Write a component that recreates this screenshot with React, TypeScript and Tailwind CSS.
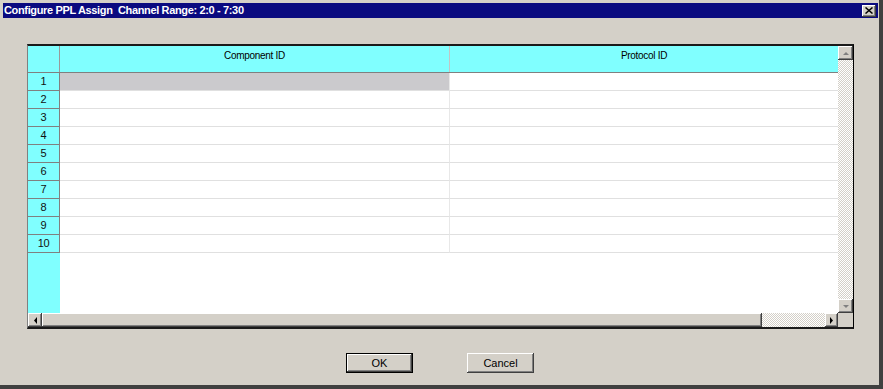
import React from 'react';

const ROWS = [1, 2, 3, 4, 5, 6, 7, 8, 9, 10];

const raised =
  'bg-[#d4d0c8] shadow-[inset_-1px_-1px_#404040,inset_1px_1px_#ffffff,inset_-2px_-2px_#808080,inset_2px_2px_#d4d0c8]';
const dither =
  'bg-[conic-gradient(#d4d0c8_25%,#ffffff_0_50%,#d4d0c8_0_75%,#ffffff_0)] bg-[length:2px_2px]';

const Arrow: React.FC<{ dir: 'up' | 'down' | 'left' | 'right'; color: string }> = ({ dir, color }) => {
  const pts: Record<string, string> = {
    up: '1,4 4,1 7,4',
    down: '1,1 4,4 7,1',
    left: '4,0 4,7 1,3.5',
    right: '1,0 1,7 4,3.5',
  };
  const vertical = dir === 'up' || dir === 'down';
  return (
    <svg width={vertical ? 8 : 5} height={vertical ? 5 : 7} viewBox={vertical ? '0 0 8 5' : '0 0 5 7'}>
      <polygon points={pts[dir]} fill={color} />
    </svg>
  );
};

export default function App() {
  return (
    <div className="w-[883px] h-[389px] bg-[#d4d0c8] border-r-4 border-b-4 border-[#404040] pt-[3px] pl-[3px] pr-px flex flex-col font-['Liberation_Sans',Arial,sans-serif] text-black overflow-hidden">
      {/* title bar */}
      <div className="h-[15px] bg-[#0a0a80] flex items-center justify-between pl-px pr-[2px]">
        <span className="text-white font-bold text-[11px] leading-none tracking-[-0.35px] whitespace-pre">
          Configure PPL Assign  Channel Range: 2:0 - 7:30
        </span>
        <div className={`w-[14px] h-[12px] flex items-center justify-center ${raised}`}>
          <svg width="8" height="7" viewBox="0 0 8 7">
            <path d="M0.5 0.5 L7.5 6.5 M7.5 0.5 L0.5 6.5" stroke="#000" strokeWidth="1.5" />
          </svg>
        </div>
      </div>

      {/* body */}
      <div className="flex-1 flex flex-col pl-[24px] pt-[26px]">
        <div className="w-[827px] h-[285px] border-t-2 border-t-[#1a1a1a] border-l border-l-[#808080] border-r border-r-black border-b-2 border-b-[#1a1a1a] flex flex-col bg-white">
          <div className="flex h-[267px]">
            {/* table */}
            <div className="w-[810px] flex flex-col text-[10px] tracking-[-0.3px]">
              <div className="flex h-[27px] bg-[#80ffff] border-b border-[#808080]">
                <div className="w-[32px] border-r border-[#9a9a9a]" />
                <div className="w-[390px] border-r border-[#c4c4c4] text-center pt-[2px]">Component ID</div>
                <div className="w-[388px] text-center pt-[2px]">Protocol ID</div>
              </div>
              {ROWS.map(r => (
                <div key={r} className="flex h-[18px]">
                  <div className="w-[32px] bg-[#80ffff] border-r border-b border-[#808080] text-center text-[11px] leading-[17px] text-[#111]">
                    {r}
                  </div>
                  <div
                    className={`w-[390px] border-r border-b border-r-[#e8e8e8] border-b-[#e0e0e0] ${
                      r === 1 ? 'bg-[#cbcacd]' : 'bg-white'
                    }`}
                  />
                  <div className="w-[388px] border-b border-[#e0e0e0]" />
                </div>
              ))}
              <div className="flex flex-1">
                <div className="w-[32px] bg-[#80ffff]" />
                <div className="flex-1 bg-white" />
              </div>
            </div>
            {/* vertical scrollbar */}
            <div className="w-[15px] flex flex-col">
              <div className={`h-[14px] flex items-center justify-center ${raised}`}>
                <Arrow dir="up" color="#808080" />
              </div>
              <div className={`flex-1 ${dither}`} />
              <div className={`h-[14px] flex items-center justify-center ${raised}`}>
                <Arrow dir="down" color="#808080" />
              </div>
            </div>
          </div>
          {/* horizontal scrollbar */}
          <div className="flex h-[14px]">
            <div className={`w-[14px] flex items-center justify-center ${raised}`}>
              <Arrow dir="left" color="#000" />
            </div>
            <div className={`w-[720px] ${raised}`} />
            <div className={`w-[63px] ${dither}`} />
            <div className={`w-[13px] flex items-center justify-center ${raised}`}>
              <Arrow dir="right" color="#000" />
            </div>
            <div className="w-[15px] bg-[#d4d0c8]" />
          </div>
        </div>

        {/* buttons */}
        <div className="flex pl-[319px] pt-[24px] gap-[54px] text-[11px]">
          <button className="w-[67px] h-[20px] border border-black flex items-center justify-center bg-[#d4d0c8] shadow-[inset_-1px_-1px_#404040,inset_1px_1px_#ffffff,inset_-2px_-2px_#808080]">
            OK
          </button>
          <button className={`w-[67px] h-[20px] flex items-center justify-center ${raised}`}>Cancel</button>
        </div>
      </div>
    </div>
  );
}
